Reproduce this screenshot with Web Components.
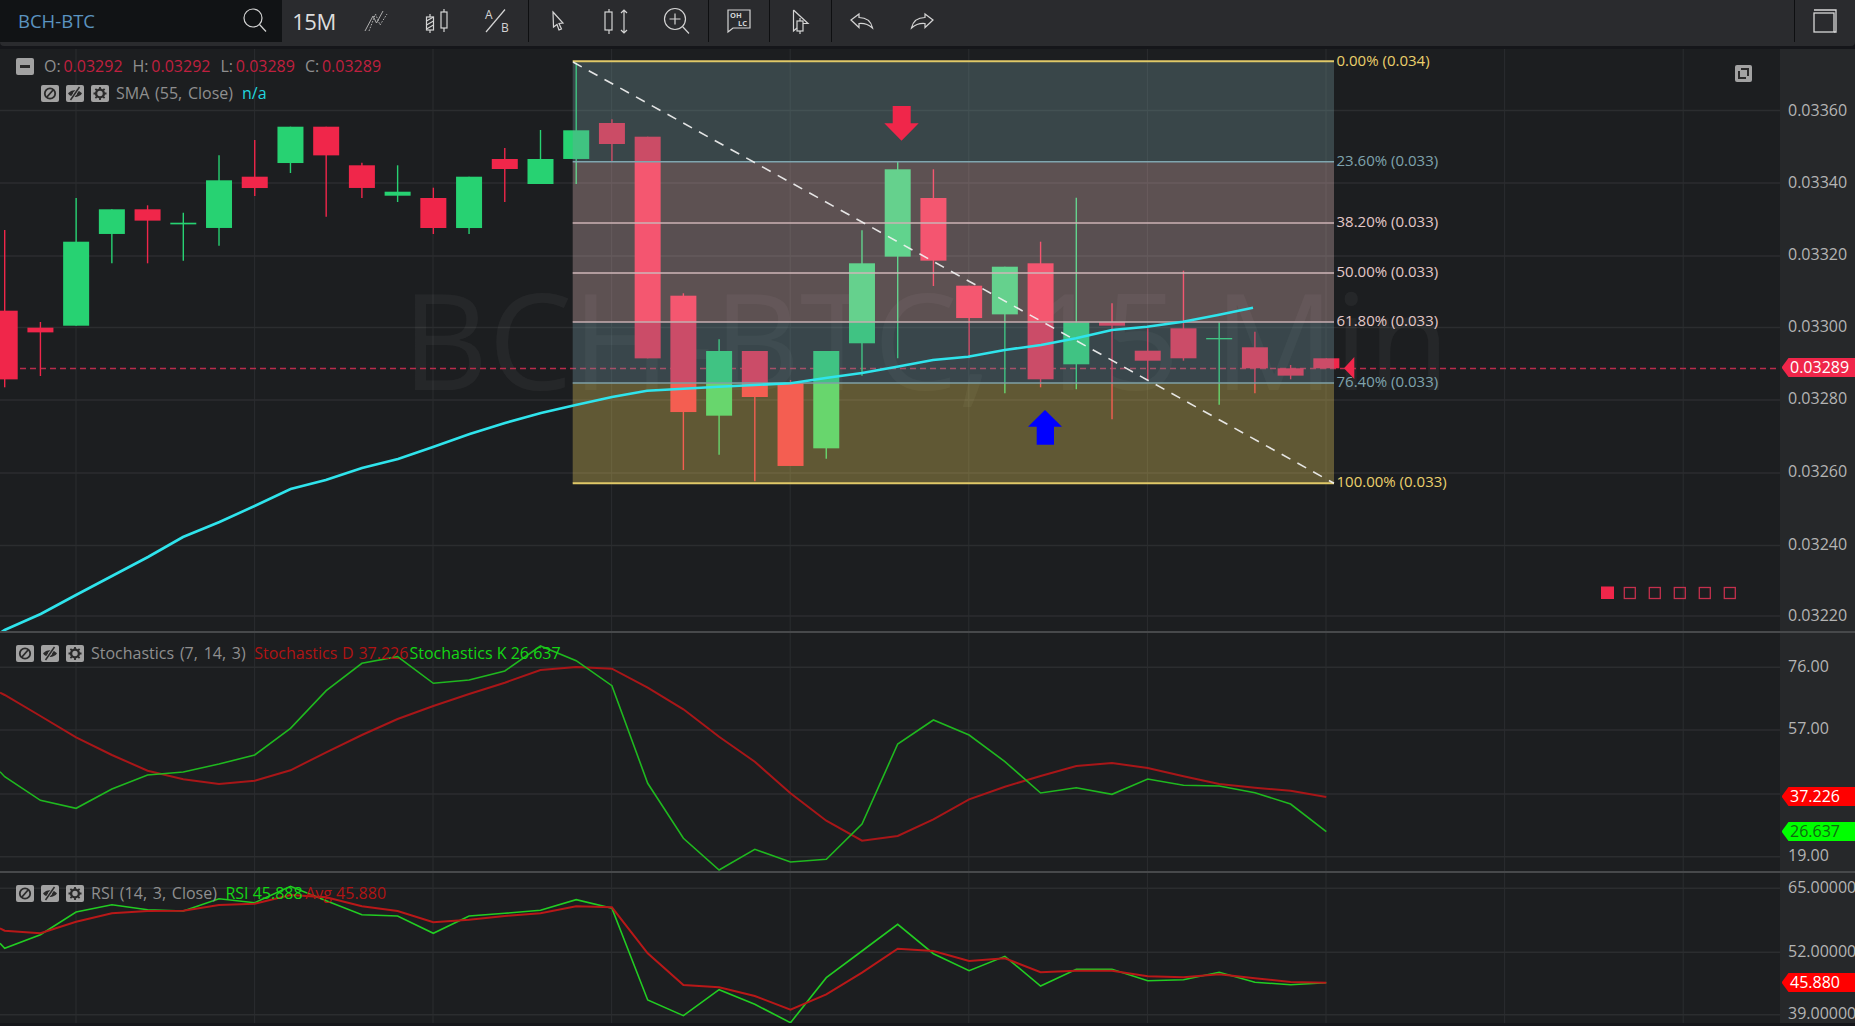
<!DOCTYPE html>
<html>
<head>
<meta charset="utf-8">
<title>BCH-BTC</title>
<style>
  html, body { margin: 0; height: 100%; background: #15161a; overflow: hidden; }
  body { font-family: "Open Sans", "Noto Sans", sans-serif; }
</style>
</head>
<body>
<chart-app></chart-app>
<script>
const FONT = `"Open Sans", "Noto Sans", sans-serif`;
const BG = "#1c1e20";
const GRID = "#2b2d2f";
const RED = "#f0264a";
const GREEN = "#27d272";

const candleX = (i) => 4.7 + 35.72 * i;
const gridXs = [76, 254.6, 433, 611.6, 790.2, 968.8, 1147.4, 1326, 1504.6, 1683.2];

// wickTop, bodyTop, bodyBottom, wickBottom, dir (y = 50 + v / 3)
const CANDLES = [
  [540, 782, 988, 1012, "r"], [816, 833, 847, 978, "r"], [444, 575, 827, 827, "g"],
  [478, 478, 552, 640, "g"], [466, 478, 512, 640, "r"], [488, 518, 523, 632, "g"],
  [316, 391, 534, 587, "g"], [270, 380, 414, 438, "r"], [230, 230, 339, 369, "g"],
  [230, 230, 316, 500, "r"], [338, 346, 414, 444, "r"], [346, 425, 437, 456, "g"],
  [413, 444, 534, 552, "r"], [380, 380, 534, 552, "g"], [294, 327, 357, 456, "r"],
  [240, 327, 402, 402, "g"], [38, 241, 327, 402, "g"], [208, 219, 282, 336, "r"],
  [260, 260, 925, 925, "r"], [730, 737, 1086, 1260, "r"], [868, 903, 1097, 1214, "g"],
  [903, 903, 1041, 1294, "r"], [990, 1000, 1248, 1248, "r"], [903, 903, 1195, 1226, "g"],
  [541, 640, 880, 977, "g"], [336, 358, 620, 925, "g"], [358, 444, 632, 708, "r"],
  [707, 707, 804, 925, "r"], [650, 650, 793, 1030, "g"], [575, 640, 988, 1012, "r"],
  [443, 817, 943, 1018, "g"], [760, 816, 827, 1108, "r"], [835, 902, 932, 990, "r"],
  [662, 835, 925, 932, "r"], [817, 864, 868, 1064, "g"], [845, 892, 955, 1030, "r"],
  [945, 955, 977, 988, "r"], [925, 925, 955, 955, "r"],
];

const SMA = [[0, 633], [4.7, 630], [40.7, 614], [76, 595], [112, 576], [148, 557], [183, 537],
  [219.5, 522], [254.6, 506], [290.6, 489], [325.8, 480], [362, 468], [398, 459], [433, 447],
  [469.7, 434], [505, 423], [541, 413], [575.7, 405], [612, 397], [647, 390.7], [683.3, 388.7],
  [719, 386.7], [754.7, 385], [790.7, 383.3], [825.7, 378], [862, 373], [897, 366.7], [933, 360],
  [968, 356.7], [1004.7, 350], [1041, 345], [1076, 338.3], [1112, 330], [1147, 326.7],
  [1183, 321.7], [1218, 315], [1253, 307.7]];

const FIB = [
  { y: 61.3, ly: 60, text: "0.00% (0.034)", line: "#e0c968", label: "#ebd06c", w: 2 },
  { y: 161.7, ly: 160, text: "23.60% (0.033)", line: "#7fa6af", label: "#7fa3ad", w: 1.5, fill: ["122,160,166", 0.31] },
  { y: 223, ly: 220.7, text: "38.20% (0.033)", line: "#cdb2b4", label: "#e3c8c8", w: 1.7, fill: ["255,206,208", 0.29] },
  { y: 273, ly: 270.7, text: "50.00% (0.033)", line: "#cfb6b8", label: "#e3c8c8", w: 1.7, fill: ["255,214,214", 0.27] },
  { y: 322, ly: 320, text: "61.80% (0.033)", line: "#c6aeb0", label: "#e3c8c8", w: 1.5, fill: ["255,206,208", 0.29] },
  { y: 383, ly: 381.3, text: "76.40% (0.033)", line: "#7fa0a6", label: "#7fa3ad", w: 1.5, fill: ["122,160,172", 0.31] },
  { y: 483.3, ly: 481.3, text: "100.00% (0.033)", line: "#e0c968", label: "#ebd06c", w: 2, fill: ["255,225,100", 0.3] },
];

// index of candle, then v values (y = 620 + v / 3)
const STOCH_K = [455, 470, 541, 565, 507, 465, 456, 432, 405, 325, 212, 130, 110, 190, 180, 153, 78, 122, 197, 490,
  655, 750, 688, 726, 718, 612, 372, 300, 345, 425, 519, 503, 523, 477, 496, 498, 518, 552, 635];
const STOCH_D = [218, 225, 288, 352, 405, 452, 478, 492, 482, 451, 397, 345, 297, 258, 222, 188, 150, 141, 146, 203,
  268, 350, 425, 520, 602, 662, 648, 598, 538, 500, 468, 438, 429, 444, 469, 492, 503, 512, 531];
// y = 860 + v / 3
const RSI_G = [250, 265, 224, 156, 134, 149, 153, 116, 128, 79, 122, 164, 168, 220, 168, 160, 151, 119, 145, 420, 467,
  389, 433, 488, 353, 273, 193, 281, 332, 289, 378, 328, 328, 362, 359, 337, 367, 374, 368];
const RSI_A = [205, 212, 220, 185, 160, 153, 152, 135, 131, 105, 112, 139, 153, 187, 179, 168, 160, 139, 142, 280, 375,
  382, 408, 449, 403, 338, 266, 273, 303, 295, 337, 332, 332, 349, 352, 343, 355, 366, 368];

const seriesPath = (vals, base) =>
  vals.map((v, i) => `${i ? "L" : "M"}${i === 0 ? 0 : candleX(i - 1).toFixed(1)} ${(base + v / 3).toFixed(1)}`).join(" ");

const gridLines = (hs, top, bottom) =>
  gridXs.map((x) => `<line x1="${x}" x2="${x}" y1="${top}" y2="${bottom}" stroke="${GRID}"/>`).join("") +
  hs.map((y) => `<line x1="0" x2="1780" y1="${y}" y2="${y}" stroke="${GRID}" stroke-width="1.5"/>`).join("");

class ChartToolbar extends HTMLElement {
  constructor() {
    super();
    this.shadow = this.attachShadow({ mode: "open" });
  }

  connectedCallback() {
    const s = `fill="none" stroke="#d4d4d4" stroke-width="1.2"`;
    this.shadow.innerHTML = `
      <style>
        :host { display: flex; height: 46px; background: #2a2b2e; color: #ddd; font-family: ${FONT}; border-radius: 0 0 4px 4px; }
        .search { width: 282px; height: 42px; background: #111315; display: flex; align-items: center; justify-content: space-between; box-sizing: border-box; padding: 0 15px 2px 18px; }
        .symbol { color: #5b94c0; font-size: 18.5px; }
        .btn { width: 60.5px; height: 42px; display: flex; align-items: center; justify-content: center; flex: none; }
        .tf { font-size: 22px; width: 64px; letter-spacing: -0.5px; }
        .sep { width: 1px; height: 42px; background: #0e0f11; flex: none; }
        .grow { flex: 1; }
        .win { width: 60px; height: 42px; display: flex; align-items: center; justify-content: center; }
        svg { display: block; overflow: visible; }
        text { font-family: ${FONT}; fill: #d4d4d4; }
      </style>
      <div class="search">
        <span class="symbol">BCH-BTC</span>
        <svg width="24" height="24" viewBox="0 0 24 24" ${s}><circle cx="10" cy="10" r="9"/><path d="M16.5 16.5 L23 23.5"/></svg>
      </div>
      <div class="btn tf">15M</div>
      <div class="btn"><svg width="24" height="22" viewBox="0 0 24 22" fill="none" stroke="#bdbdbd" stroke-width="0.9"><path d="M1 21 L9 6 L12.5 13 L19 1"/><path stroke-dasharray="1.6 1.4" d="M5 21 L11.5 4 L16 15 L23 4"/></svg></div>
      <div class="btn"><svg width="24" height="26" viewBox="0 0 24 26" ${s}><path d="M5 6 V25 M19 1 V24"/><rect x="1.5" y="9" width="7" height="13" fill="#2a2b2e"/><path d="M1.5 13 L8.5 9 M1.5 17 L8.5 13 M1.5 21 L8.5 17"/><rect x="16" y="4" width="6" height="16" fill="#2a2b2e"/></svg></div>
      <div class="btn"><svg width="25" height="24" viewBox="0 0 25 24" ${s}><path d="M1 23 L20 0.5"/><text x="0" y="10" font-size="12" stroke="none">A</text><text x="16" y="23" font-size="12" stroke="none">B</text></svg></div>
      <div class="sep"></div>
      <div class="btn" style="width:58px"><svg width="12" height="20" viewBox="0 0 12 20" ${s}><path d="M1 1 L11 12 L7 12.5 L9.5 18 L7 19 L5 13.5 L1.5 16 Z"/></svg></div>
      <div class="btn"><svg width="25" height="25" viewBox="0 0 25 25" ${s}><path d="M5 0 V25"/><rect x="1" y="3" width="7" height="18" fill="#2a2b2e"/><path d="M20 1 V24 M17 4 L20 1 L23 4 M17 21 L20 24 L23 21"/></svg></div>
      <div class="btn"><svg width="26" height="26" viewBox="0 0 26 26" ${s}><circle cx="11" cy="11" r="10.5"/><path d="M18.5 18.5 L25 25.5 M11 5.5 V16.5 M5.5 11 H16.5"/></svg></div>
      <div class="sep"></div>
      <div class="btn"><svg width="24" height="24" viewBox="0 0 24 24" ${s}><path d="M1 1 H23 V19 H6 L1 23 Z"/><text x="3" y="9" font-size="7.5" font-weight="700" stroke="none">OH</text><text x="11" y="17" font-size="7.5" font-weight="700" stroke="none">LC</text></svg></div>
      <div class="sep"></div>
      <div class="btn"><svg width="17" height="25" viewBox="0 0 17 25" ${s}><path d="M1.5 1 V22 L5 19 M1.5 1 L16 14.5 H11"/><rect x="5" y="12" width="6" height="10"/><path d="M8 9 V12 M8 22 V25"/></svg></div>
      <div class="sep"></div>
      <div class="btn"><svg width="23" height="16" viewBox="0 0 23 16" ${s}><path d="M1 7 L9 1 V4.5 C16 4.5 21 8 22.5 15 C18 11 14 10 9 10.5 V14.5 Z"/></svg></div>
      <div class="btn"><svg width="23" height="16" viewBox="0 0 23 16" ${s}><path d="M22 7 L14 1 V4.5 C7 4.5 2 8 0.5 15 C5 11 9 10 14 10.5 V14.5 Z"/></svg></div>
      <div class="grow"></div>
      <div class="sep"></div>
      <div class="win"><svg width="24" height="24" viewBox="0 0 24 24" fill="none" stroke="#d8d8d8" stroke-width="1.3"><rect x="1" y="4" width="20" height="19"/><path d="M1 1 H23 V23 H21"/></svg></div>
    `;
  }
}

class LegendIcons extends HTMLElement {
  constructor() {
    super();
    this.shadow = this.attachShadow({ mode: "open" });
    this.shadow.innerHTML = `
      <style>
        :host { display: inline-flex; gap: 7px; align-items: center; }
        svg { display: block; width: 18px; height: 17px; }
      </style>
      <svg viewBox="0 0 18 17"><rect width="18" height="17" rx="2" fill="#a2a2a2"/><circle cx="9" cy="8.5" r="5.2" fill="none" stroke="#2a2a2a" stroke-width="1.8"/><path d="M5.5 12.5 L12.5 4.5" stroke="#2a2a2a" stroke-width="1.8"/></svg>
      <svg viewBox="0 0 18 17"><rect width="18" height="17" rx="2" fill="#a2a2a2"/><path d="M2 8.5 C5 4 13 4 16 8.5 C13 13 5 13 2 8.5 Z" fill="#2a2a2a"/><circle cx="9" cy="8.5" r="2" fill="#a2a2a2"/><path d="M4.5 15 L13.5 2" stroke="#a2a2a2" stroke-width="3.2"/><path d="M4.5 15 L13.5 2" stroke="#2a2a2a" stroke-width="1.5"/></svg>
      <svg viewBox="0 0 18 17"><rect width="18" height="17" rx="2" fill="#a2a2a2"/><circle cx="9" cy="8.5" r="3.9" fill="none" stroke="#2a2a2a" stroke-width="2.4"/><path d="M9 2 V15 M2.5 8.5 H15.5 M4.4 3.9 L13.6 13.1 M13.6 3.9 L4.4 13.1" stroke="#2a2a2a" stroke-width="1.8" stroke-dasharray="2 9"/></svg>
    `;
  }
}

class ChartLegend extends HTMLElement {
  constructor() {
    super();
    this.shadow = this.attachShadow({ mode: "open" });
    this.shadow.innerHTML = `
      <style>
        :host { position: absolute; display: flex; align-items: center; gap: 7px; left: 16px; font: 16px/20px ${FONT}; word-spacing: 1.6px; color: #8f8f8f; white-space: nowrap; }
      </style>
      <legend-icons></legend-icons><slot></slot>
    `;
  }
}

class AxisTag extends HTMLElement {
  constructor() {
    super();
    this.shadow = this.attachShadow({ mode: "open" });
    this.shadow.innerHTML = `
      <style>
        :host { position: absolute; left: 1.5px; right: 0; display: flex; align-items: center; padding-left: 8.5px; height: 19px; font: 16px/19px ${FONT}; box-sizing: border-box; clip-path: polygon(0 50%, 7px 0, 100% 0, 100% 100%, 7px 100%); background: var(--tag-bg); color: var(--tag-fg); }
      </style>
      <slot></slot>
    `;
  }
}

class YAxis extends HTMLElement {
  constructor() {
    super();
    this.shadow = this.attachShadow({ mode: "open" });
    this.shadow.innerHTML = `
      <style>
        :host { position: relative; display: block; width: 75px; flex: none; background: #26282a; color: #b4b4b4; font: 16px/20px ${FONT}; overflow: hidden; }
      </style>
      <slot></slot>
    `;
  }

  // ticks sit by their value on the scale, offsets are relative to the pane top
  setTicks(ticks, top) {
    ticks.forEach(([text, y]) => {
      const el = document.createElement("span");
      el.textContent = text;
      el.style.cssText = `position:absolute;left:8px;top:${y - top - 10}px`;
      this.appendChild(el);
    });
  }

  addTag(text, y, top, bg, fg) {
    const tag = document.createElement("axis-tag");
    tag.textContent = text;
    tag.style.cssText = `top:${y - top - 9.5}px;--tag-bg:${bg};--tag-fg:${fg}`;
    this.appendChild(tag);
  }
}

class MainPane extends HTMLElement {
  constructor() {
    super();
    this.shadow = this.attachShadow({ mode: "open" });
  }

  candles() {
    const y = (v) => (50 + v / 3).toFixed(1);
    return CANDLES.map(([wt, bt, bb, wb, dir], i) => {
      const c = dir === "g" ? GREEN : RED;
      const x = candleX(i);
      return `<line x1="${x}" x2="${x}" y1="${y(wt)}" y2="${y(wb)}" stroke="${c}" stroke-width="1.4"/>
        <rect x="${x - 13}" y="${y(bt)}" width="26" height="${(bb - bt) / 3}" fill="${c}"/>`;
    }).join("");
  }

  fib() {
    let out = "";
    FIB.forEach((f, i) => {
      if (f.fill) {
        const prev = FIB[i - 1].y;
        out += `<rect x="572.7" y="${prev}" width="761.3" height="${f.y - prev}" fill="rgba(${f.fill[0]},${f.fill[1]})"/>`;
      }
    });
    FIB.forEach((f) => {
      out += `<line x1="572.7" x2="1334" y1="${f.y}" y2="${f.y}" stroke="${f.line}" stroke-width="${f.w}"/>
        <text x="1336.5" y="${f.ly}" dominant-baseline="central" font-size="15" fill="${f.label}">${f.text}</text>`;
    });
    return out;
  }

  connectedCallback() {
    const hs = [110.5, 183, 256, 327.5, 400, 473, 545.6, 616];
    const squares = [1624.3, 1649.3, 1674.3, 1699.3, 1724.3]
      .map((x) => `<rect x="${x}" y="587.5" width="11" height="11" fill="none" stroke="#c4304d" stroke-width="1.3"/>`).join("");
    this.shadow.innerHTML = `
      <style>
        :host { position: relative; display: flex; height: 582px; background: ${BG}; }
        .plot { flex: 1; position: relative; min-width: 0; }
        svg { display: block; width: 100%; height: 100%; font-family: ${FONT}; }
        .ohlc { position: absolute; left: 16px; top: 7px; display: flex; align-items: center; gap: 10px; font: 16px/20px ${FONT}; color: #8f8f8f; white-space: nowrap; }
        .ohlc b { font-weight: 400; color: #c0203f; margin-left: 2.8px; }
        .minus { width: 18px; height: 17px; border-radius: 2px; background: #a2a2a2; position: relative; }
        .minus::after { content: ""; position: absolute; left: 4px; right: 4px; top: 7px; height: 3px; background: #2a2a2a; }
        .sma { top: 34px; left: 41px; }
        .sma i { font-style: normal; color: #21d4de; margin-left: 2px; }
        .max { position: absolute; left: 1735px; top: 16px; width: 17px; height: 17px; }
      </style>
      <div class="plot">
        <svg viewBox="0 49 1780 582">
          ${gridLines(hs, 49, 631)}
          <text x="402" y="390" font-size="133.5" fill="rgba(255,255,255,0.045)">BCH-BTC, 15 Min</text>
          <line x1="0" x2="1780" y1="368.4" y2="368.4" stroke="#b92c4b" stroke-width="1.5" stroke-dasharray="6 4"/>
          ${this.candles()}
          ${this.fib()}
          <line x1="573" y1="62" x2="1334" y2="483.3" stroke="#f2f2f2" stroke-width="1.6" stroke-dasharray="10 8" opacity="0.92"/>
          <polyline points="${SMA.map((p) => p.join(",")).join(" ")}" fill="none" stroke="#2fe4ec" stroke-width="2.6"/>
          <path d="M892.7 106 H910.7 V123.3 H918.7 L901.5 140.7 L884.3 123.3 H892.7 Z" fill="${RED}"/>
          <path d="M1045 410 L1062 426.7 H1054 V444.7 H1036.7 V426.7 H1028 Z" fill="#0000ff"/>
          <path d="M1344 368.3 L1354.3 357 V379 Z" fill="${RED}"/>
          <rect x="1601" y="586.5" width="13" height="12.5" fill="${RED}"/>
          ${squares}
        </svg>
        <div class="ohlc">
          <div class="minus"></div>
          <span>O:<b>0.03292</b></span><span>H:<b>0.03292</b></span><span>L:<b>0.03289</b></span><span>C:<b>0.03289</b></span>
        </div>
        <chart-legend class="sma"><span>SMA (55, Close)</span> <i>n/a</i></chart-legend>
        <svg class="max" viewBox="0 0 17 17"><rect width="17" height="17" rx="2" fill="#a2a2a2"/><path d="M6 4 H13 V11 M11 13 H4 V6" fill="none" stroke="#2a2a2a" stroke-width="2"/></svg>
      </div>
      <y-axis></y-axis>
    `;
    const axis = this.shadow.querySelector("y-axis");
    axis.setTicks([["0.03360", 109.5], ["0.03340", 182], ["0.03320", 254], ["0.03300", 325.5],
      ["0.03280", 398], ["0.03260", 471], ["0.03240", 543.7], ["0.03220", 615]], 49);
    axis.addTag("0.03289", 367.5, 49, RED, "#fff");
  }
}

class IndicatorPane extends HTMLElement {
  constructor() {
    super();
    this.shadow = this.attachShadow({ mode: "open" });
  }

  configure({ top, height, hs, lines, ticks, tags, legend, legendTop }) {
    this.shadow.innerHTML = `
      <style>
        :host { position: relative; display: flex; height: ${height}px; background: ${BG}; }
        .plot { flex: 1; position: relative; min-width: 0; }
        svg { display: block; width: 100%; height: 100%; }
        chart-legend { top: ${legendTop}px; }
      </style>
      <div class="plot">
        <svg viewBox="0 ${top} 1780 ${height}">
          ${gridLines(hs, top, top + height)}
          ${lines.map((l) => `<path d="${l.d}" fill="none" stroke="${l.color}" stroke-width="${l.w}"/>`).join("")}
        </svg>
        <chart-legend>${legend}</chart-legend>
      </div>
      <y-axis></y-axis>
    `;
    const axis = this.shadow.querySelector("y-axis");
    axis.setTicks(ticks, top);
    tags.forEach((t) => axis.addTag(t[0], t[1], top, t[2], t[3]));
  }
}

class PaneSeparator extends HTMLElement {
  constructor() {
    super();
    this.shadow = this.attachShadow({ mode: "open" });
    this.shadow.innerHTML = `<style>:host { display: block; height: 2px; background: #47494b; }</style>`;
  }
}

class ChartApp extends HTMLElement {
  constructor() {
    super();
    this.shadow = this.attachShadow({ mode: "open" });
  }

  connectedCallback() {
    this.shadow.innerHTML = `
      <style>
        :host { display: flex; flex-direction: column; width: 1855px; height: 1026px; }
        .gap { height: 3px; flex: none; }
      </style>
      <chart-toolbar></chart-toolbar>
      <div class="gap"></div>
      <main-pane></main-pane>
      <pane-separator></pane-separator>
      <indicator-pane id="stoch"></indicator-pane>
      <pane-separator></pane-separator>
      <indicator-pane id="rsi"></indicator-pane>
    `;
    const legendSpan = (text, color, ml, ws) => `<span style="color:${color};margin-left:${ml}px;word-spacing:${ws}px">${text}</span>`;
    this.shadow.querySelector("#stoch").configure({
      top: 633, height: 238, legendTop: 10,
      hs: [667.3, 730, 794, 856.7],
      lines: [
        { d: seriesPath(STOCH_D, 620), color: "#a81618", w: 2 },
        { d: seriesPath(STOCH_K, 620), color: "#1fb81f", w: 1.6 },
      ],
      ticks: [["76.00", 666], ["57.00", 728], ["38.00", 793], ["19.00", 855]],
      tags: [["37.226", 796.5, "#ff0000", "#fff"], ["26.637", 831.5, "#00ff00", "#0f6b0f"]],
      legend: `<span>Stochastics (7, 14, 3)</span>${legendSpan("Stochastics D 37.226", "#b01414", 1.5, 0.6)}${legendSpan("Stochastics K 26.637", "#14d614", -6, 0)}`,
    });
    this.shadow.querySelector("#rsi").configure({
      top: 873, height: 150, legendTop: 10,
      hs: [888.3, 952.3, 1014.7],
      lines: [
        { d: seriesPath(RSI_G, 860), color: "#22cc22", w: 1.6 },
        { d: seriesPath(RSI_A, 860), color: "#b81818", w: 2 },
      ],
      ticks: [["65.00000", 887], ["52.00000", 951], ["39.00000", 1013]],
      tags: [["45.880", 982.5, "#ff0000", "#fff"]],
      legend: `<span>RSI (14, 3, Close)</span>${legendSpan("RSI 45.888", "#14d614", 1.5, 0)}${legendSpan("Avg 45.880", "#b01414", -4.5, 0)}`,
    });
  }
}

customElements.define("legend-icons", LegendIcons);
customElements.define("chart-legend", ChartLegend);
customElements.define("axis-tag", AxisTag);
customElements.define("y-axis", YAxis);
customElements.define("chart-toolbar", ChartToolbar);
customElements.define("main-pane", MainPane);
customElements.define("indicator-pane", IndicatorPane);
customElements.define("pane-separator", PaneSeparator);
customElements.define("chart-app", ChartApp);
</script>
</body>
</html>
